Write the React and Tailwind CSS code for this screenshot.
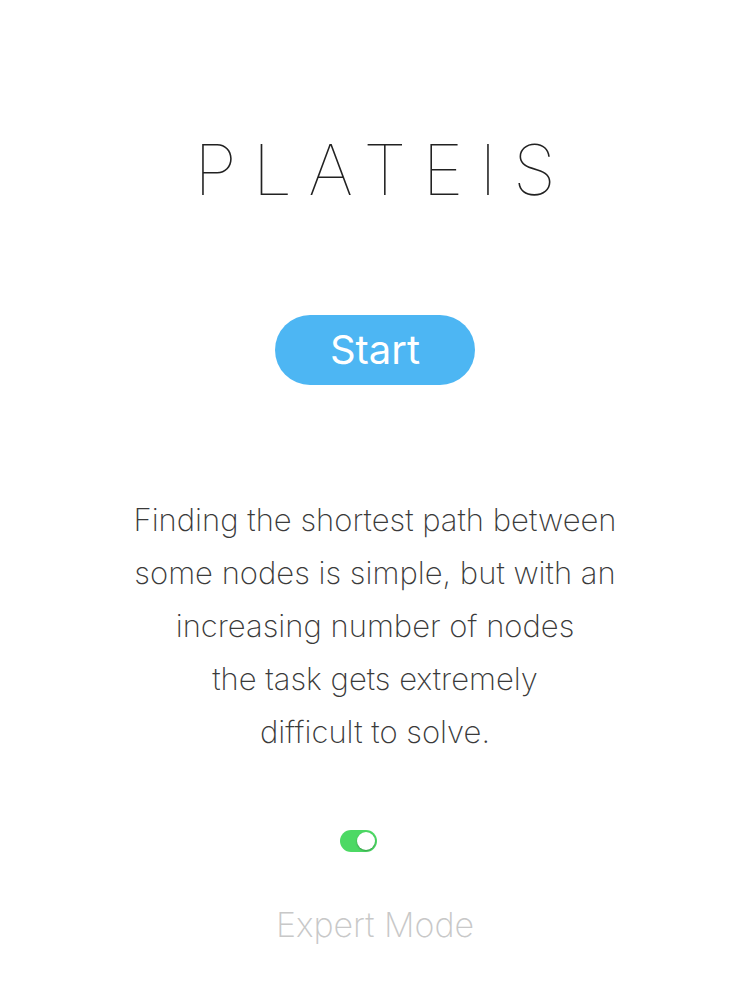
import React, { useState } from "react";

const App = () => {
  const [expert, setExpert] = useState(true);

  return (
    <div className="w-[750px] h-[1000px] bg-white flex flex-col items-center font-['Inter',sans-serif]">
      {/* Title */}
      <h1 className="mt-[135px] text-[70px] leading-none font-thin tracking-[0.23em] pl-[0.23em] text-[#222]">
        PLATEIS
      </h1>

      {/* Start button */}
      <button className="mt-[110px] w-[200px] h-[70px] rounded-full bg-[#4db6f3] text-white text-[40px] font-normal leading-none flex items-center justify-center">
        Start
      </button>

      {/* Description */}
      <p className="mt-[108px] text-center text-[31px] leading-[53px] font-extralight text-[#3a3a3a]">
        Finding the shortest path between
        <br />
        some nodes is simple, but with an
        <br />
        increasing number of nodes
        <br />
        the task gets extremely
        <br />
        difficult to solve.
      </p>

      {/* Expert mode toggle */}
      <button
        onClick={() => setExpert(!expert)}
        className={`mt-[72px] mr-[34px] w-[37px] h-[22px] rounded-full p-[2px] flex items-center transition-colors ${
          expert ? "bg-[#4cd964] justify-end" : "bg-[#e5e5e5] justify-start"
        }`}
        aria-label="Expert Mode"
      >
        <span className="block w-[18px] h-[18px] rounded-full bg-white shadow-[0_1px_2px_rgba(0,0,0,0.3)]" />
      </button>

      <p className="mt-[56px] text-[34px] leading-none font-extralight text-[#c8c8c8]">Expert Mode</p>
    </div>
  );
};

export default App;
